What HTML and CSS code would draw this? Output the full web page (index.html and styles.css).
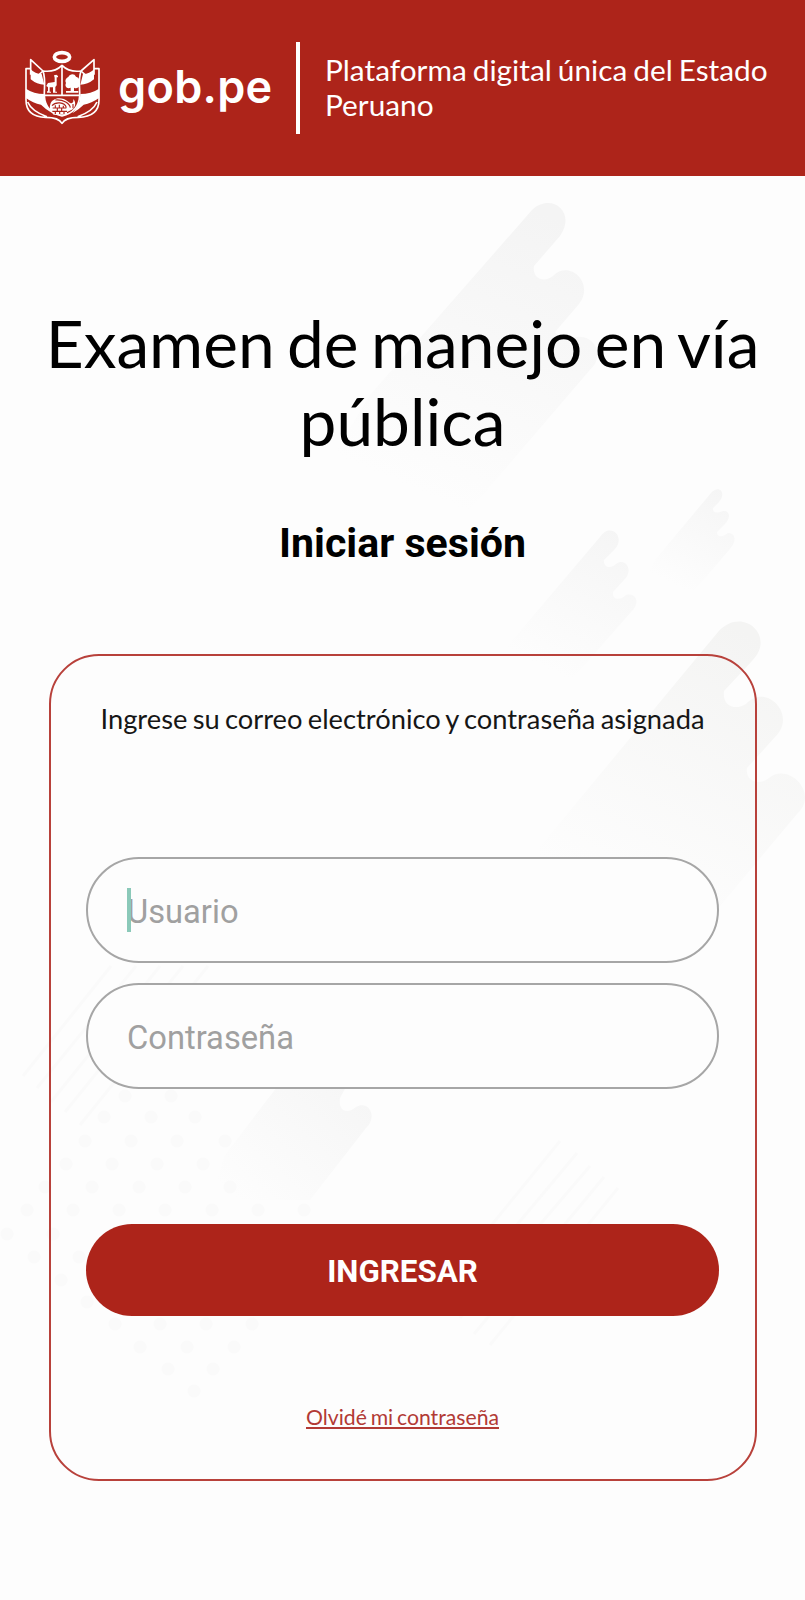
FILE: index.html
```html
<!DOCTYPE html>
<html lang="es">
<head>
<meta charset="utf-8">
<title>Examen de manejo en vía pública</title>
<link rel="stylesheet" href="styles.css">
</head>
<body>
<div class="page">
  <svg class="backdrop" viewBox="0 0 805 1600" aria-hidden="true">
    <defs>
      <linearGradient id="fade-a" gradientUnits="userSpaceOnUse" x1="560" y1="220" x2="440" y2="500"><stop offset="0" stop-color="#f4f4f4"/><stop offset="1" stop-color="#fdfdfd"/></linearGradient>
      <linearGradient id="fade-b" gradientUnits="userSpaceOnUse" x1="620" y1="530" x2="550" y2="670"><stop offset="0" stop-color="#f5f5f5"/><stop offset="1" stop-color="#fdfdfd"/></linearGradient>
      <linearGradient id="fade-c" gradientUnits="userSpaceOnUse" x1="725" y1="490" x2="675" y2="585"><stop offset="0" stop-color="#f5f5f5"/><stop offset="1" stop-color="#fdfdfd"/></linearGradient>
      <linearGradient id="fade-d" gradientUnits="userSpaceOnUse" x1="760" y1="640" x2="620" y2="900"><stop offset="0" stop-color="#f4f4f3"/><stop offset="1" stop-color="#fdfdfd"/></linearGradient>
      <linearGradient id="fade-e" gradientUnits="userSpaceOnUse" x1="355" y1="1090" x2="250" y2="1210"><stop offset="0" stop-color="#f6f6f6"/><stop offset="1" stop-color="#fdfdfd"/></linearGradient>
    </defs>
    <path fill="url(#fade-a)" d="M370 395 532 210C551 192 577 212 560 236L534 266C532 279 544 283 553 276 570 259 595 284 579 304L555 332C560 339 568 342 576 337 592 334 602 350 595 364L470 510H300Z"/>
    <path fill="url(#fade-b)" d="M500 655 600 537C610 522 626 536 615 549L604 560C603 568 611 569 616 564 626 557 634 571 624 580L613 592C612 600 620 601 626 595 636 592 641 603 631 612L560 693H470Z"/>
    <path fill="url(#fade-c)" d="M655 560 711 493C719 484 727 493 719 502L713 508C712 514 719 513 723 511 730 510 731 518 725 524L717 532C717 538 723 537 728 533 736 533 737 542 729 550L695 590H640Z"/>
    <path fill="url(#fade-d)" d="M525 865 718 632C742 605 777 636 752 661L724 691C722 706 735 711 746 704 766 682 798 715 775 737L747 768C745 780 758 787 769 778 788 762 820 793 797 814L700 930H470Z"/>
    <path fill="url(#fade-e)" d="M225 1155 290 1070H355L340 1098C338 1112 348 1114 356 1107 369 1100 378 1117 366 1128L310 1200H210Z"/>
    <g class="dots">
      <path d="M125 1096h.1M171 1096h.1M104 1117h.1M151 1117h.1M195 1117h.1M85 1141h.1M131 1141h.1M177 1141h.1M225 1141h.1M66 1164h.1M112 1164h.1M157 1164h.1M203 1164h.1M45 1187h.1M92 1187h.1M139 1187h.1M185 1187h.1M230 1187h.1M27 1210h.1M73 1210h.1M119 1210h.1M165 1210h.1M212 1210h.1M258 1210h.1M304 1210h.1M7 1234h.1M53 1234h.1M34 1257h.1M79 1257h.1M61 1280h.1M87 1302h.1M115 1324h.1M160 1324h.1M206 1324h.1M252 1324h.1M140 1347h.1M187 1347h.1M234 1347h.1M168 1369h.1M213 1369h.1M194 1391h.1"/>
    </g>
    <g class="streaks">
      <path d="M23 1076 111 966M37 1088 136 966M51 1102 160 966M65 1112 183 966M80 1125 208 966M432 1298 560 1141M446 1310 577 1153M460 1318 590 1166M474 1334 604 1177M490 1345 618 1188"/>
    </g>
  </svg>

  <header class="topbar">
    <svg class="crest" viewBox="30 30 225 225" aria-hidden="true">
      <ellipse cx="141" cy="51" rx="23" ry="13" fill="none" stroke="#fff" stroke-width="11"/>
      <g fill="none" stroke="#fff" stroke-width="5" stroke-linejoin="round">
        <path d="M141 76C125 92 106 96 84 93 93 118 87 142 88 168 90 200 108 220 141 228 174 220 192 200 194 168 195 142 189 118 198 93 176 96 157 92 141 76ZM141 78V168M88 166H194"/>
        <path d="M84 93 47 59V104M47 86H33V180C33 215 54 231 92 232 120 232 134 237 141 250 148 237 162 232 190 232 228 231 252 215 252 180V86H237M198 93 237 59V104M72 104 84 93M210 104 198 93M38 186Q50 214 96 230M246 186Q234 214 188 230"/>
      </g>
      <g fill="#fff">
        <path d="M47 88Q60 102 80 102L88 134Q66 134 47 118ZM33 146Q56 162 88 162L90 184Q98 204 112 220 92 208 78 194 54 190 33 174Z"/>
        <path d="M237 88Q224 102 204 102L196 134Q218 134 237 118ZM252 146Q228 162 196 162L194 184Q186 204 172 220 192 208 206 194 230 190 252 174Z"/>
        <path d="M117 106 124 104 129 108V112H125V136L121 141V155H126V158H114V142H104V155H108V158H96V154H99V139L97 142 94 137 99 129 119 126V113Z"/>
        <path d="M167 153V143C156 148 148 139 153 129 148 119 156 113 160 111 165 100 179 100 183 110 193 113 196 121 192 129 197 140 187 148 177 143V153H190V158H153V153Z"/>
        <path d="M106 193C110 174 139 167 160 185 170 194 178 188 174 178 184 182 184 208 164 212L156 216V224H116C104 214 103 202 106 193Z"/>
      </g>
      <path d="M111 197C121 185 149 185 154 203M121 180C146 178 164 190 166 203M113 204H154M112 214H156M121 196V204M133 194V204M145 197V204M127 205V213M140 205V213M121 215V222M134 215V222M147 215V222M174 192V205" fill="none" stroke="#ad241a" stroke-width="3.500"/>
    </svg>
    <span class="brand">gob.pe</span>
    <span class="divider"></span>
    <p class="tagline">Plataforma digital única del Estado<br>Peruano</p>
  </header>

  <main class="content">
    <h1 class="title">Examen de manejo en vía<br>pública</h1>
    <h2 class="subtitle">Iniciar sesión</h2>
    <form class="card">
      <p class="hint">Ingrese su correo electrónico y contraseña asignada</p>
      <label class="field"><span class="caret"></span><span class="placeholder">Usuario</span></label>
      <label class="field"><span class="placeholder">Contraseña</span></label>
      <button class="submit" type="button">INGRESAR</button>
      <a class="forgot" href="#">Olvidé mi contraseña</a>
    </form>
  </main>
</div>
</body>
</html>
```
FILE: styles.css
```css
* {
  box-sizing: border-box;
}

body {
  margin: 0;
  background: #fdfdfd;
  font-family: Lato, sans-serif;
}

.page {
  position: relative;
  width: 805px;
  height: 1600px;
  overflow: hidden;
}

.backdrop {
  position: absolute;
  inset: 0;
  width: 805px;
  height: 1600px;
}

.dots path {
  fill: none;
  stroke: #fafafa;
  stroke-width: 13;
  stroke-linecap: round;
}

.streaks path {
  fill: none;
  stroke: #fafafa;
  stroke-width: 3;
}

.topbar {
  position: relative;
  display: flex;
  align-items: center;
  height: 176px;
  padding-left: 25px;
  background: #ad241a;
  color: #fff;
}

.crest {
  flex: none;
  width: 75px;
  height: 75px;
  margin-bottom: 1px;
}

.brand {
  width: 178px;
  margin-left: 18px;
  padding-bottom: 3px;
  font: 600 45px/60px Inter, sans-serif;
  letter-spacing: 0.3px;
  white-space: nowrap;
}

.divider {
  flex: none;
  width: 4px;
  height: 92px;
  background: #fff;
}

.tagline {
  margin: 0 0 0 25px;
  padding-bottom: 2px;
  font-size: 29.8px;
  line-height: 35px;
  word-spacing: -1.6px;
  white-space: nowrap;
}

.content {
  position: relative;
  display: flex;
  flex-direction: column;
  align-items: center;
}

.title {
  margin: 128px 0 0;
  font-size: 65.8px;
  font-weight: 400;
  line-height: 78px;
  word-spacing: -4.5px;
  text-align: center;
  white-space: nowrap;
  color: #000;
}

.subtitle {
  margin: 58px 0 0;
  font: 700 41.1px/50px Roboto, sans-serif;
  color: #000;
}

.card {
  display: flex;
  flex-direction: column;
  align-items: center;
  width: 708px;
  height: 827px;
  margin-top: 86px;
  padding: 45px 35px 0;
  border: 2px solid #b8413b;
  border-radius: 50px;
}

.hint {
  margin: 0 0 120px;
  font-size: 27.3px;
  line-height: 36px;
  word-spacing: -1.7px;
  white-space: nowrap;
  color: #161616;
}

.field {
  position: relative;
  display: flex;
  flex: none;
  align-items: center;
  width: 633px;
  height: 106px;
  margin-bottom: 20px;
  padding: 4px 0 0 39px;
  border: 2px solid #a6a6a6;
  border-radius: 53px;
  background: #fdfdfd;
  font: 32.7px/40px Roboto, sans-serif;
  color: #a0a0a0;
}

.caret {
  position: absolute;
  left: 39px;
  top: 29px;
  width: 4px;
  height: 44px;
  background: #8bc9b9;
}

.submit {
  flex: none;
  width: 633px;
  height: 92px;
  margin: 115px 0 86px;
  padding: 4px 0 0;
  border: 0;
  border-radius: 46px;
  background: #ad241a;
  font: 700 31.3px/40px Roboto, sans-serif;
  color: #fff;
}

.forgot {
  font-size: 21.2px;
  line-height: 30px;
  word-spacing: -1.6px;
  color: #b23a35;
  white-space: nowrap;
}
```
